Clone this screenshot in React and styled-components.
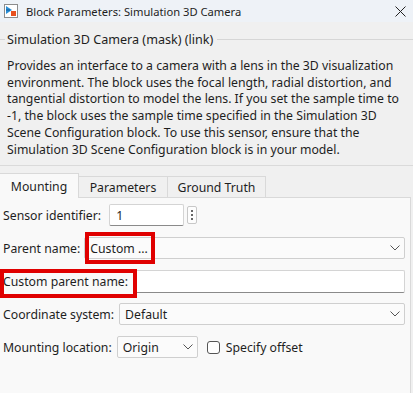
import React from 'react'
import styled, { createGlobalStyle } from 'styled-components'

const GlobalStyle = createGlobalStyle`
  html, body {
    margin: 0;
    padding: 0;
    background: #f0f0f0;
  }
  body {
    font-family: "Noto Sans", "Open Sans", sans-serif;
    font-size: 12.25px;
    color: #1e1e1e;
  }
`

const Window = styled.div`
  width: 413px;
  height: 393px;
  overflow: hidden;
  display: flex;
  flex-direction: column;
  background: #f0f0f0;
`

const TitleBar = styled.div`
  height: 22px;
  flex: none;
  display: flex;
  align-items: center;
  padding: 0 6px 0 4px;
  background: #eef2f7;
  font-size: 11.2px;
`

const TitleText = styled.span`
  margin-left: 8px;
  flex: 1;
  white-space: nowrap;
`

const CloseButton = styled.span`
  display: flex;
  align-items: center;
  justify-content: center;
  width: 14px;
  height: 14px;
`

const GroupHead = styled.div`
  display: flex;
  align-items: center;
  margin-top: 8px;
  height: 18px;
  font-size: 12.6px;
  white-space: nowrap;

  &::before,
  &::after {
    content: '';
    height: 1px;
    background: #d6d6d6;
  }
  &::before {
    width: 5px;
    margin-right: 2px;
  }
  &::after {
    flex: 1;
    margin-left: 4px;
  }
`

const Description = styled.div`
  padding: 10px 7px 0;
  line-height: 16.7px;
  white-space: nowrap;
  height: 118px;
  border-bottom: 1px solid #dadada;
  box-sizing: border-box;
`

const TabBar = styled.div`
  display: flex;
  align-items: flex-end;
  margin-top: 7px;
  height: 25px;
  flex: none;
`

const Tab = styled.div`
  box-sizing: border-box;
  height: ${({ $active }) => ($active ? '25px' : '22px')};
  width: ${({ $w }) => $w}px;
  display: flex;
  align-items: center;
  justify-content: center;
  border: 1px solid #d9d9d9;
  border-bottom: ${({ $active }) => ($active ? 'none' : '1px solid #d9d9d9')};
  margin-left: -1px;
  background: ${({ $active }) => ($active ? '#f9f9f9' : '#f0f0f0')};
  position: relative;
  z-index: ${({ $active }) => ($active ? 1 : 0)};
  padding-top: ${({ $active }) => ($active ? '0' : '1px')};
  &:first-child {
    margin-left: 0;
    border-left: none;
  }
`

const Panel = styled.div`
  flex: 1;
  margin-top: -1px;
  width: 411px;
  box-sizing: border-box;
  background: #f9f9f9;
  border-top: 1px solid #d9d9d9;
  border-right: 1px solid #d9d9d9;
  display: flex;
  flex-direction: column;
  gap: 11px;
  padding: 6px 5px 0 3px;
`

const Row = styled.div`
  display: flex;
  align-items: center;
  height: 22px;
  position: relative;
`

const Label = styled.span`
  white-space: nowrap;
  margin-right: ${({ $gap }) => $gap ?? 8}px;
`

const TextBox = styled.div`
  box-sizing: border-box;
  height: ${({ $h }) => $h ?? 22}px;
  width: ${({ $w }) => ($w ? `${$w}px` : 'auto')};
  flex: ${({ $w }) => ($w ? 'none' : 1)};
  background: #ffffff;
  border: 1px solid #d4d4d4;
  border-bottom-color: #8a8a8a;
  border-radius: 2px;
  display: flex;
  align-items: center;
  padding-left: 6px;
`

const Select = styled.div`
  box-sizing: border-box;
  height: 22px;
  width: ${({ $w }) => ($w ? `${$w}px` : 'auto')};
  flex: ${({ $w }) => ($w ? 'none' : 1)};
  background: #fbfbfb;
  border: 1px solid #cfcfcf;
  border-radius: 2px;
  display: flex;
  align-items: center;
  padding: 0 4px 0 5px;
`

const SelectValue = styled.span`
  flex: 1;
  white-space: nowrap;
`

const MenuButton = styled.div`
  box-sizing: border-box;
  width: 10px;
  height: 18px;
  margin-left: 3px;
  border: 1px solid #c8c8c8;
  border-radius: 2px;
  background: #fdfdfd;
  display: flex;
  flex-direction: column;
  align-items: center;
  justify-content: center;
  gap: 2px;
`

const Dot = styled.span`
  width: 2px;
  height: 2px;
  background: #333;
  border-radius: 1px;
`

const Callout = styled.span`
  position: absolute;
  box-sizing: border-box;
  border: 4px solid #e00000;
  left: ${({ $x }) => $x}px;
  top: ${({ $y }) => $y}px;
  width: ${({ $w }) => $w}px;
  height: ${({ $h }) => $h}px;
  pointer-events: none;
`

const CheckBox = styled.span`
  box-sizing: border-box;
  width: 13px;
  height: 13px;
  border: 1px solid #555;
  border-radius: 3px;
  background: #fff;
  margin: 0 6px 0 9px;
`

const Chevron = () => (
  <svg width="10" height="6" viewBox="0 0 10 6">
    <path d="M0.5 0.5 L5 5 L9.5 0.5" fill="none" stroke="#555" strokeWidth="1" />
  </svg>
)

const BlockIcon = () => (
  <svg width="14" height="14" viewBox="0 0 14 14">
    <rect x="0.5" y="0.5" width="13" height="13" fill="#fff" stroke="#8c8c8c" />
    <path d="M2 2 L8 6 L2 10 Z" fill="#2a8fd6" />
    <path d="M2 6 L6 6" stroke="#0b5b9c" strokeWidth="1" />
    <rect x="7" y="7" width="5" height="5" fill="#e8501e" />
  </svg>
)

const CloseIcon = () => (
  <svg width="11" height="11" viewBox="0 0 11 11">
    <path d="M0.5 0.5 L10.5 10.5 M10.5 0.5 L0.5 10.5" stroke="#222" strokeWidth="1" />
  </svg>
)

const descriptionLines = [
  'Provides an interface to a camera with a lens in the 3D visualization',
  'environment. The block uses the focal length, radial distortion, and',
  'tangential distortion to model the lens. If you set the sample time to',
  '-1, the block uses the sample time specified in the Simulation 3D',
  'Scene Configuration block. To use this sensor, ensure that the',
  'Simulation 3D Scene Configuration block is in your model.',
]

export default function App() {
  return (
    <Window>
      <GlobalStyle />
      <TitleBar>
        <BlockIcon />
        <TitleText>Block Parameters: Simulation 3D Camera</TitleText>
        <CloseButton>
          <CloseIcon />
        </CloseButton>
      </TitleBar>

      <GroupHead>Simulation 3D Camera (mask) (link)</GroupHead>
      <Description>
        {descriptionLines.map(line => (
          <div key={line}>{line}</div>
        ))}
      </Description>

      <TabBar>
        <Tab $active $w={79}>Mounting</Tab>
        <Tab $w={90}>Parameters</Tab>
        <Tab $w={99}>Ground Truth</Tab>
      </TabBar>

      <Panel>
        <Row>
          <Label>Sensor identifier:</Label>
          <TextBox $w={75}>1</TextBox>
          <MenuButton>
            <Dot />
            <Dot />
            <Dot />
          </MenuButton>
        </Row>

        <Row>
          <Label $gap={4}>Parent name:</Label>
          <Select>
            <SelectValue>Custom ...</SelectValue>
            <Chevron />
          </Select>
          <Callout $x={82} $y={-5} $w={70} $h={32} />
        </Row>

        <Row>
          <Label $gap={5}>Custom parent name:</Label>
          <TextBox $h={23} />
          <Callout $x={-3} $y={-1} $w={137} $h={29} />
        </Row>

        <Row>
          <Label $gap={5}>Coordinate system:</Label>
          <Select>
            <SelectValue>Default</SelectValue>
            <Chevron />
          </Select>
        </Row>

        <Row>
          <Label $gap={5}>Mounting location:</Label>
          <Select $w={81}>
            <SelectValue>Origin</SelectValue>
            <Chevron />
          </Select>
          <CheckBox />
          <Label>Specify offset</Label>
        </Row>
      </Panel>
    </Window>
  )
}
